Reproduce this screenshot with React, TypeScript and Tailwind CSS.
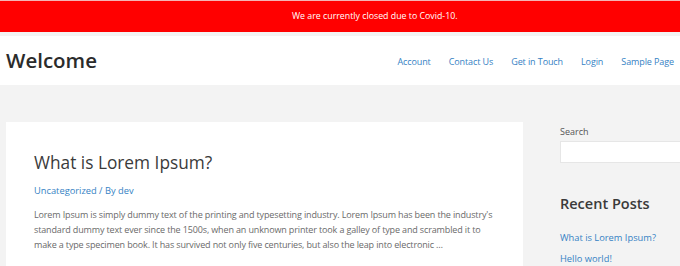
import React from "react";

const navLinks = ["Account", "Contact Us", "Get in Touch", "Login", "Sample Page"];

export default function App() {
  return (
    <div className="w-[680px] h-[266px] overflow-hidden bg-[#f3f3f3] font-['Open_Sans',sans-serif]">
      <div className="h-[32px] bg-[#ff0000] border-t border-[#f4b4b4] flex items-center pl-[292px]">
        <p className="text-white text-[8.8px] leading-none">We are currently closed due to Covid-10.</p>
      </div>
      <div className="h-[4px]" />
      <header className="h-[49px] bg-white flex items-center justify-between pl-[6px] pr-[6px]">
        <h1 className="text-[20.5px] font-semibold text-[#2b2b2b] leading-none">Welcome</h1>
        <nav className="flex items-center gap-[18px] pt-[3px]">
          {navLinks.map((link) => (
            <a key={link} href="#" className="text-[9px] tracking-[-0.1px] text-[#3582c4]">
              {link}
            </a>
          ))}
        </nav>
      </header>
      <div className="flex pt-[37px] pl-[6px]">
        <article className="w-[517px] h-[200px] bg-white pl-[28px] pr-[20px] pt-[29px] shrink-0">
          <h2 className="text-[17.3px] leading-[24px] text-[#3a3a3a]">What is Lorem Ipsum?</h2>
          <div className="mt-[9px] text-[9.3px] leading-[14px] text-[#3582c4]">
            <a href="#">Uncategorized</a> / By <a href="#">dev</a>
          </div>
          <p className="mt-[9px] text-[9px] tracking-[-0.14px] leading-[15px] text-[#6a6a6a] whitespace-nowrap">
            Lorem Ipsum is simply dummy text of the printing and typesetting industry. Lorem Ipsum has been the industry's
            <br />
            standard dummy text ever since the 1500s, when an unknown printer took a galley of type and scrambled it to
            <br />
            make a type specimen book. It has survived not only five centuries, but also the leap into electronic …
          </p>
        </article>
        <aside className="ml-[37px] pt-[4px] flex-1">
          <label className="block text-[9px] leading-[12px] text-[#555]">Search</label>
          <div className="mt-[3px] h-[22px] bg-white border border-[#e6e6e6] border-r-0" />
          <h3 className="mt-[31px] text-[14.5px] font-semibold leading-[20px] text-[#3a3a3a]">Recent Posts</h3>
          <ul className="mt-[17px] text-[9.3px] leading-[14px] text-[#3582c4] space-y-[7px]">
            <li><a href="#">What is Lorem Ipsum?</a></li>
            <li><a href="#">Hello world!</a></li>
          </ul>
        </aside>
      </div>
    </div>
  );
}
